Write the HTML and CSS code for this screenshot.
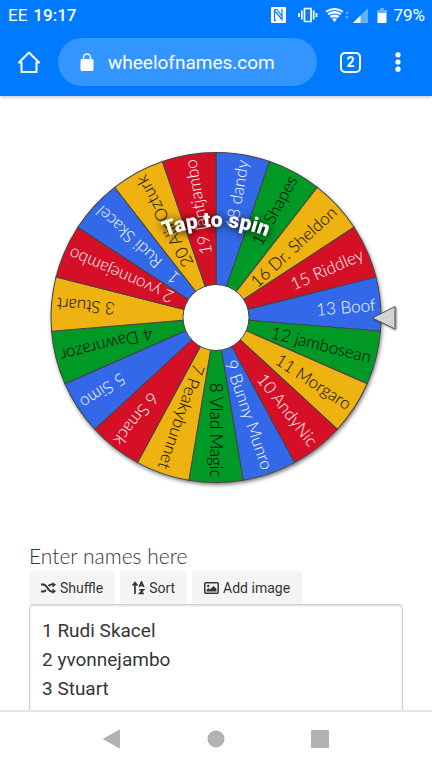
FILE: index.html
```html
<!DOCTYPE html>
<html lang="en">
<head>
<meta charset="utf-8">
<meta name="viewport" content="width=device-width, initial-scale=1">
<title>Wheel of Names</title>
<link rel="stylesheet" href="styles.css">
</head>
<body>
<header class="top">
  <div class="status">
    <span>EE</span>
    <span class="clock">19:17</span>
    <svg class="status-icons" viewBox="0 0 117 18" width="117" height="18" fill="#fff" aria-hidden="true">
      <path fill-rule="evenodd" d="M2 1h13q1 0 1 1v14q0 1-1 1H2q-1 0-1-1V2q0-1 1-1z"/>
      <path d="M4.500 15V4.500L12 13.500V3M4 3.500H7L12.500 11M4 14.500H6" fill="none" stroke="#007bff" stroke-width="1.200"/>
      <path d="M34.500 2.500h6.500v13h-6.500zM31.800 4.500v9M29 7v4M43.700 4.500v9M46.500 7v4" fill="none" stroke="#fff" stroke-width="1.700"/>
      <path d="M55.500 5Q64.500-1 73.500 5L64.500 16z"/>
      <path d="M56 7.500Q64.500 1.500 73 7.500M58.500 10Q64.500 6 70.500 10M61 13Q64.500 10.500 68 13" fill="none" stroke="#007bff" stroke-width="1.100"/>
      <path d="M75 8l2-3 2 3zM75 10l2 3 2-3z" opacity=".35"/>
      <path d="M83 17L98 2v15z" opacity=".4"/><path d="M83 17L90.500 9.500V17z"/>
      <path d="M107.500 4h2.500V2h4v2h2.500v13h-9z"/>
      <path d="M107.500 4h2.500V2h4v2h2.500v3h-9z" fill="#66b0ff"/>
    </svg>
    <span>79%</span>
  </div>
  <div class="browser">
    <button class="icon-button" aria-label="Home">
      <svg viewBox="0 0 24 24" width="24" height="24" fill="none" stroke="#fff" stroke-width="2" stroke-linejoin="round" stroke-linecap="round"><path d="M2 12.500L12 2.500l10 10H19.500V22h-15v-9.500z"/></svg>
    </button>
    <a class="address" href="#">
      <svg viewBox="0 0 14 18" width="14" height="18" aria-hidden="true"><path d="M3.500 8V4.500a3.500 3.500 0 0 1 7 0V8" fill="none" stroke="#fff" stroke-width="1.500"/><rect x=".5" y="6" width="13" height="12" rx="1.500" fill="#fff"/></svg>
      <span>wheelofnames.com</span>
    </a>
    <button class="tabs" aria-label="2 open tabs">2</button>
    <button class="icon-button" aria-label="More">
      <svg viewBox="0 0 24 24" width="24" height="24" fill="#fff"><circle cx="12" cy="4.800" r="2.600"/><circle cx="12" cy="12" r="2.600"/><circle cx="12" cy="19.200" r="2.600"/></svg>
    </button>
  </div>
</header>

<main class="page">
  <svg class="wheel" viewBox="-216 -221.5 432 444" role="img" aria-label="Wheel of names">
    <defs>
      <path id="tap-arc" d="M-76 -67A133 133 0 0 1 76 -67"/>
    </defs>
    <circle class="disc" r="165"/>
    <g id="slices"></g>
    <circle class="hub" r="33"/>
    <path class="pointer" d="M156.500 .5L179 -11V11.500z"/>
    <text class="tap"><textPath href="#tap-arc" startOffset="50%">Tap to spin</textPath></text>
  </svg>

  <section class="entry">
    <label class="entry-label" for="names">Enter names here</label>
    <div class="tools">
      <button class="tool">
        <svg viewBox="0 0 15 12" width="15" height="12" fill="none" stroke="#363636" stroke-width="2"><path d="M0 2.500h2.500C6 2.500 7 9.500 10.500 9.500H12M0 9.500h2.500q1.500 0 2.500-1.500M7.500 4q1.500-1.500 3-1.500H12"/><path d="M11.500 0L15 2.700l-3.500 2.800zM11.500 6.500L15 9.300 11.500 12z" fill="#363636" stroke="none"/></svg>
        Shuffle
      </button>
      <button class="tool">
        <svg viewBox="0 0 13 14" width="13" height="14" fill="none" stroke="#363636" stroke-width="1.700"><path d="M3 13V2M.6 4.500L3 1.500l2.400 3M7.200 6L9.500 1l2.300 5M8 4.500h3M7.400 8.800h4L7.800 12.300h4"/></svg>
        Sort
      </button>
      <button class="tool">
        <svg viewBox="0 0 15 12" width="15" height="12"><rect x=".8" y=".8" width="13.400" height="10.400" rx="1" fill="none" stroke="#363636" stroke-width="1.500"/><circle cx="4.200" cy="4" r="1.200" fill="#363636"/><path d="M2.500 9.500V8l2-2 1.500 1.500L9.500 4l3 3v2.500z" fill="#363636"/></svg>
        Add image
      </button>
    </div>
    <textarea class="names" id="names" rows="10" spellcheck="false">1 Rudi Skacel
2 yvonnejambo
3 Stuart</textarea>
  </section>
</main>

<nav class="system">
  <button class="icon-button" aria-label="Back"><svg viewBox="0 0 20 20" width="20" height="20"><path d="M1.500 10L17.500 1v18z" fill="#b2b2b2" stroke="#b2b2b2" stroke-linejoin="round"/></svg></button>
  <button class="icon-button" aria-label="Home screen"><svg viewBox="0 0 20 20" width="20" height="20"><circle cx="10" cy="10" r="8.500" fill="#b2b2b2"/></svg></button>
  <button class="icon-button" aria-label="Recent apps"><svg viewBox="0 0 20 20" width="20" height="20"><rect x="1" y="1" width="18" height="18" rx="1" fill="#b2b2b2"/></svg></button>
</nav>
<script src="wheel.js"></script>
</body>
</html>
```
FILE: styles.css
```css
* { box-sizing: border-box; }

body {
  margin: 0;
  height: 100vh;
  display: flex;
  flex-direction: column;
  background: #fff;
  color: #363636;
  font-family: Roboto, sans-serif;
}

button {
  border: 0;
  padding: 0;
  background: none;
  color: inherit;
  font-family: inherit;
}

svg { display: block; flex: none; }

.top {
  position: relative;
  flex: none;
  height: 96px;
  background: #007bff;
  color: #fff;
  box-shadow: 0 1px 4px rgba(0, 0, 0, 0.25);
}

.status {
  display: flex;
  align-items: center;
  gap: 6px;
  height: 30px;
  padding: 0 7px 0 8px;
  font-size: 17px;
}

.clock { font-weight: 500; }
.status-icons { margin-left: auto; }

.browser {
  display: flex;
  align-items: center;
  height: 64px;
  padding: 0 22px 0 17px;
}

.icon-button {
  display: grid;
  place-items: center;
}

.address {
  flex: 1;
  display: flex;
  align-items: center;
  gap: 14px;
  height: 48px;
  margin: 0 23px 0 17px;
  padding-left: 22px;
  border-radius: 24px;
  background: #3395ff;
  color: #fff;
  font-size: 19px;
  text-decoration: none;
}

.tabs {
  width: 21px;
  height: 21px;
  margin-right: 25px;
  border: 2px solid #fff;
  border-radius: 5px;
  font-size: 14px;
  font-weight: 700;
  line-height: 17px;
}

.page {
  flex: 1;
  min-height: 0;
  overflow: hidden;
}

.wheel {
  width: 100%;
  height: auto;
}

.disc {
  fill: #fff;
  filter: drop-shadow(1px 2px 2px rgba(0, 0, 0, 0.6));
}

.slice {
  stroke: #444;
  stroke-width: 1;
}

.slice-name {
  font-family: Lato, sans-serif;
  font-size: 17px;
  font-weight: 300;
  text-anchor: end;
  dominant-baseline: central;
  white-space: pre;
}

.hub {
  fill: #fff;
  stroke: #444;
}

.pointer {
  fill: #d3d3d3;
  stroke: #555;
  filter: drop-shadow(1px 1px 1px rgba(0, 0, 0, 0.5));
}

.tap {
  fill: #fff;
  font-size: 21px;
  font-weight: 900;
  text-anchor: middle;
  filter: drop-shadow(0 1px 4px #000);
}

.entry { padding: 0 29px; }

.entry-label {
  display: block;
  font-family: Lato, sans-serif;
  font-size: 21px;
  font-weight: 300;
  line-height: 31px;
}

.tools {
  display: flex;
  gap: 5px;
}

.tool {
  display: flex;
  align-items: center;
  gap: 4px;
  height: 33px;
  padding: 0 12px;
  border-radius: 3px;
  background: #f4f4f4;
  font-size: 14px;
}

.names {
  display: block;
  width: 100%;
  padding: 11px 12px;
  border: 1px solid #d0d0d0;
  border-radius: 4px;
  outline: 0;
  resize: none;
  box-shadow: inset 0 1px 2px rgba(0, 0, 0, 0.15);
  color: #363636;
  font-family: inherit;
  font-size: 19px;
  line-height: 29px;
}

.system {
  position: relative;
  flex: none;
  display: flex;
  justify-content: space-between;
  align-items: center;
  height: 58px;
  padding: 0 102px 2px;
  border-top: 2px solid #e5e5e5;
  background: #fff;
}
```
FILE: wheel.js
```js
const SVG = "http://www.w3.org/2000/svg";
const names = [
  "18 dandy", "17 Shapes", "16 Dr. Sheldon", "15 Riddley", "13 Boof",
  "12 jambosean", "11 Morgaro", "10 AndyNic", "9 Bunny Munro", "8 Vlad Magic",
  "7 Peakybunnet", "6 Smack", "5 Simo", "4 Dawnrazor", "3 Stuart",
  "2 yvonnejambo", "1   Rudi Skacel", "20 AlinOzturk", "19 Iantjambo"
];
const palette = [
  { fill: "#3369e8", text: "#fff" },
  { fill: "#009925", text: "#000" },
  { fill: "#eeb211", text: "#000" },
  { fill: "#d50f25", text: "#fff" }
];
const radius = 165;
const textEdge = 160;
const step = 360 / names.length;
const half = step * Math.PI / 360;
const x = radius * Math.cos(half);
const y = radius * Math.sin(half);
const slices = document.getElementById("slices");

function add(parent, tag, attributes) {
  const node = document.createElementNS(SVG, tag);
  for (const key in attributes) node.setAttribute(key, attributes[key]);
  parent.appendChild(node);
  return node;
}

names.forEach((name, i) => {
  const tone = i === names.length - 1 ? palette[3] : i === names.length - 2 ? palette[2] : palette[i % 4];
  const group = add(slices, "g", { transform: `rotate(${-90 + step * (i + 0.5)})` });
  add(group, "path", {
    class: "slice",
    fill: tone.fill,
    d: `M0 0L${x} ${-y}A${radius} ${radius} 0 0 1 ${x} ${y}Z`
  });
  const label = add(group, "text", { class: "slice-name", x: textEdge, y: 0, fill: tone.text });
  label.textContent = name;
});
```
